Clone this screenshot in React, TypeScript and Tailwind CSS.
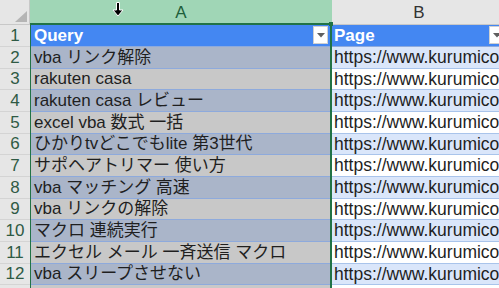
import React from "react";

const queries = [
  "vba リンク解除",
  "rakuten casa",
  "rakuten casa レビュー",
  "excel vba 数式 一括",
  "ひかりtvどこでもlite 第3世代",
  "サポヘアトリマー 使い方",
  "vba マッチング 高速",
  "vba リンクの解除",
  "マクロ 連続実行",
  "エクセル メール 一斉送信 マクロ",
  "vba スリープさせない",
];

// row heights include the 1px bottom gridline
const heights = [
  "h-[22px]", "h-[22px]", "h-[21px]", "h-[22px]", "h-[22px]", "h-[21px]",
  "h-[22px]", "h-[22px]", "h-[21px]", "h-[22px]", "h-[22px]", "h-[21px]", "h-[22px]",
];

function FilterButton() {
  return (
    <div className="absolute right-[2px] top-[1px] bottom-[2px] w-[15px] bg-white border border-[#d0d0d0] flex items-center justify-center">
      <svg width="8" height="5" viewBox="0 0 8 5">
        <path d="M0 0 H8 L4 4.5 Z" fill="#5f5f5f" />
      </svg>
    </div>
  );
}

function RowNum({ n, h }: { n: number; h: string }) {
  return (
    <div className={`${h} w-[30px] shrink-0 bg-[#e6e6e6] border-b border-[#d4d4d4] flex items-center justify-center text-[17px] text-[#2f5a44]`}>
      {n <= 12 ? n : ""}
    </div>
  );
}

export default function App() {
  return (
    <div
      className="relative w-[499px] h-[288px] overflow-hidden bg-white"
      style={{ fontFamily: '"Liberation Sans", "Noto Sans CJK JP", sans-serif' }}
    >
      {/* column headers */}
      <div className="flex h-[25px]">
        <div className="relative w-[30px] shrink-0 bg-[#e6e6e6] border-b border-r border-[#c8c8c8]">
          <svg className="absolute right-[2px] bottom-[2px]" width="12" height="11" viewBox="0 0 12 11">
            <path d="M12 0 V11 H0 Z" fill="#b5b5b5" />
          </svg>
        </div>
        <div className="w-[302px] shrink-0 bg-[#a0d6b6] border-b-2 border-[#217346] flex items-center justify-center text-[17px] text-[#1d5e3a] pt-[2px]">
          A
        </div>
        <div className="w-[174px] shrink-0 bg-[#e6e6e6] border-b border-[#c8c8c8] flex items-center justify-center text-[17px] text-[#333333] pt-[2px]">
          B
        </div>
      </div>

      {/* body */}
      <div className="flex">
        <div className="flex flex-col">
          {heights.map((h, i) => (
            <RowNum key={i} n={i + 1} h={h} />
          ))}
        </div>

        {/* column A (selected) */}
        <div className="w-[302px] shrink-0 flex flex-col border-l border-r-2 border-[#217346]">
          <div className={`${heights[0]} relative bg-[#4487f2] border-b border-[#8eaadc] flex items-center pl-[3px] text-[17px] font-bold text-white`}>
            Query
            <FilterButton />
          </div>
          {heights.slice(1).map((h, i) => (
            <div
              key={i}
              className={`${h} border-b border-[#8eaadc] flex items-center pl-[3px] text-[17px] text-[#1f1f1f] whitespace-nowrap overflow-hidden ${
                i % 2 === 0 ? "bg-[#aab5c9]" : "bg-[#c8c8c8]"
              }`}
            >
              {queries[i] ?? ""}
            </div>
          ))}
        </div>

        {/* column B */}
        <div className="w-[174px] shrink-0 flex flex-col">
          <div className={`${heights[0]} relative bg-[#4487f2] border-b border-[#8eaadc] flex items-center pl-[2px] text-[17px] font-bold text-white`}>
            Page
            <FilterButton />
          </div>
          {heights.slice(1).map((h, i) => (
            <div
              key={i}
              className={`${h} border-b border-[#a9c4eb] flex items-center pl-[2px] text-[17.5px] text-[#1f1f1f] whitespace-nowrap overflow-hidden ${
                i % 2 === 0 ? "bg-[#dae6fa]" : "bg-white"
              }`}
            >
              {i < queries.length ? "https://www.kurumico" : ""}
            </div>
          ))}
        </div>
      </div>

      {/* fill handle corner of the selection */}
      <div className="absolute left-[329px] top-[22px] w-[4px] h-[4px] bg-[#217346]" />

      {/* column-select cursor */}
      <svg className="absolute left-[112px] top-[2px]" width="12" height="15" viewBox="0 0 12 15">
        <path
          d="M4.5 0.5 H7.5 V8 H11 L6 14 L1 8 H4.5 Z"
          fill="#000"
          stroke="#fff"
          strokeWidth="1"
        />
      </svg>
    </div>
  );
}
